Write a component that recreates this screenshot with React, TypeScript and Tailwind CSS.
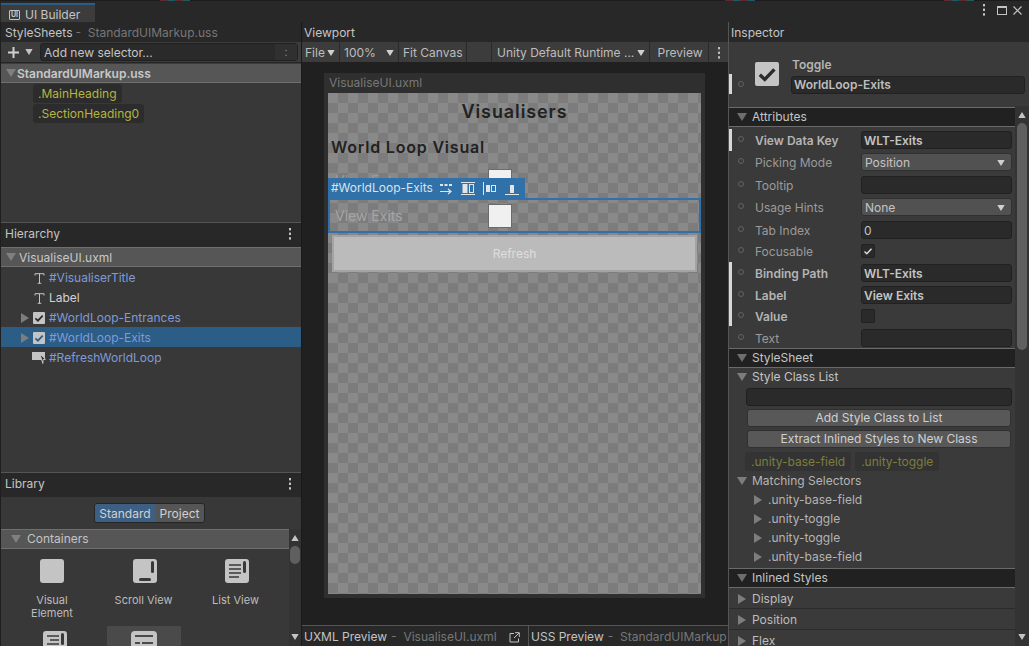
import type { ReactNode } from "react";

const Down = ({ className = "" }: { className?: string }) => (
    <svg width="10" height="8" viewBox="0 0 10 8" className={className}><path d="M0 0h10L5 8z" fill="currentColor" /></svg>
);

const Right = ({ className = "" }: { className?: string }) => (
    <svg width="8" height="10" viewBox="0 0 8 10" className={className}><path d="M0 0l8 5-8 5z" fill="currentColor" /></svg>
);

const Dots = ({ className = "" }: { className?: string }) => (
    <svg width="4" height="12" viewBox="0 0 4 12" className={className}>
        <rect x="1" y="0" width="2" height="2.4" fill="currentColor" />
        <rect x="1" y="4.6" width="2" height="2.4" fill="currentColor" />
        <rect x="1" y="9.2" width="2" height="2.4" fill="currentColor" />
    </svg>
);

const CheckIcon = ({ size = 12, stroke = "#2b2b2b" }: { size?: number; stroke?: string }) => (
    <svg width={size} height={size} viewBox="0 0 12 12">
        <rect width="12" height="12" rx="1" fill="#c4c4c4" />
        <path d="M2.4 6.4l2.5 2.3 4.8-5" fill="none" stroke={stroke} strokeWidth="1.7" />
    </svg>
);

const TIcon = () => (
    <svg width="11" height="11" viewBox="0 0 11 11" className="ml-[1px]">
        <path d="M1 2.5V.7h9v1.8M5.5.7v9.6M3.7 10.3h3.6" fill="none" stroke="#c4c4c4" strokeWidth="1" />
    </svg>
);

const ButtonIcon = () => (
    <svg width="14" height="14" viewBox="0 0 14 14" className="-ml-[1px]">
        <rect y="1" width="13" height="8" fill="#c4c4c4" />
        <path d="M8 3l5.5 5.2-2.4.3-.3 4z" fill="#2e2e2e" stroke="#c4c4c4" strokeWidth="1" />
    </svg>
);

// bits of the window behind, showing along the very top edge
function BehindBits({ className }: { className: string }) {
    return (
        <div className={`flex h-px ${className}`}>
            <div className="w-[8px] bg-[#5c2b2f]" />
            <div className="w-[7px] bg-[#1f5a63]" />
            <div className="w-[8px] bg-[#5c2b2f]" />
            <div className="w-[7px] bg-[#1f5a63]" />
        </div>
    );
}

function PanelHeader({ title, sub, dots, className = "" }: { title: string; sub?: string; dots?: boolean; className?: string }) {
    return (
        <div className={`flex h-5 shrink-0 items-center bg-[#282828] pl-1 pr-[9px] text-[#c4c4c4] ${className}`}>
            <span>{title}</span>
            {sub && <span className="ml-[3px] whitespace-nowrap text-[#777]">-&nbsp; {sub}</span>}
            {dots && <Dots className="ml-auto text-[#c4c4c4]" />}
        </div>
    );
}

function SelectorPill({ children, dim }: { children: ReactNode; dim?: boolean }) {
    return (
        <span className={`rounded-[3px] leading-[19px] ${dim ? "bg-[#333] px-[6px] text-[#7d7d3d]" : "bg-[#2c2c2c] px-[5px] text-[#b5b53f]"}`}>{children}</span>
    );
}

function TreeRow({ icon, label, arrow, selected, white }: { icon: ReactNode; label: string; arrow?: boolean; selected?: boolean; white?: boolean }) {
    return (
        <div className={`flex h-5 items-center pt-[2px] ${selected ? "bg-[#2c5d87]" : ""}`}>
            <div className="flex w-[32px] justify-end pr-[4px] text-[#7d7d7d]">{arrow && <Right />}</div>
            <div className="flex w-4 justify-start">{icon}</div>
            <span className={white ? "text-[#d2d2d2]" : "text-[#7e9bd9]"}>{label}</span>
        </div>
    );
}

function LibraryItem({ label, icon, shift }: { label: ReactNode; icon: ReactNode; shift?: boolean }) {
    return (
        <div className="flex flex-col items-center text-center text-[11px] leading-[13px] text-[#bdbdbd]">
            {icon}
            <div className={`mt-[11px] ${shift ? "-ml-[3px]" : ""}`}>{label}</div>
        </div>
    );
}

function FoldHeader({ title, className = "" }: { title: string; className?: string }) {
    return (
        <div className={`flex items-center border-y border-[#6a6a6a] bg-[#212121] ${className}`}>
            <Down className="ml-[8px] text-[#6e6e6e]" />
            <span className="ml-[5px] text-[#c4c4c4]">{title}</span>
        </div>
    );
}

function CollapsedHeader({ title }: { title: string }) {
    return (
        <div className="flex h-[21px] shrink-0 items-center border-b border-[#2b2b2b] pt-[2px]">
            <Right className="ml-[9px] text-[#7d7d7d]" />
            <span className="ml-[6px] text-[#bdbdbd]">{title}</span>
        </div>
    );
}

function Row({ label, bold, h, marked, children }: { label: string; bold?: boolean; h: string; marked?: boolean; children: ReactNode }) {
    return (
        <div className={`relative flex shrink-0 items-center ${h}`}>
            {marked && <div className="absolute left-0 top-0 h-full w-[3px] bg-[#d8d8d8]" />}
            <span className="ml-[9px] h-[6px] w-[6px] -translate-y-[1px] rounded-full border border-[#626262]" />
            <span className={`ml-[11px] w-[106px] translate-y-[1px] whitespace-nowrap ${bold ? "font-semibold text-[#b4b4b4]" : "text-[#9a9a9a]"}`}>{label}</span>
            {children}
        </div>
    );
}

const inputCls = "flex h-[18px] w-[151px] items-center rounded-[3px] border border-[#212121] bg-[#2a2a2a] px-[2px] pt-[1px] text-[#c4c4c4]";

function Input({ value, bold }: { value?: string; bold?: boolean }) {
    return <div className={`${inputCls} ${bold ? "font-semibold text-[#bdbdbd]" : ""}`}>{value}</div>;
}

function Select({ value }: { value: string }) {
    return (
        <div className="flex h-[18px] w-[151px] items-center justify-between rounded-[3px] border border-[#303030] bg-[#515151] pl-[3px] pr-[5px] pt-[1px] text-[#c4c4c4]">
            {value}
            <Down className="scale-75 text-[#d0d0d0]" />
        </div>
    );
}

function WideButton({ children }: { children: ReactNode }) {
    return (
        <div className="ml-[18px] flex h-[18px] w-[264px] items-center justify-center rounded-[3px] border border-[#303030] bg-[#585858] text-[#d0d0d0]">{children}</div>
    );
}

function ToolCell({ className, children }: { className: string; children?: ReactNode }) {
    return <div className={`flex items-center bg-[#3c3c3c] pt-[2px] ${className}`}>{children}</div>;
}

function SelectorNode({ label }: { label: string }) {
    return (
        <div className="flex h-[19px] items-center">
            <Right className="ml-[25px] text-[#7d7d7d]" />
            <span className="ml-[6px] text-[#b4b4b4]">{label}</span>
        </div>
    );
}

const checker = "bg-[image:conic-gradient(#7c7c7c_25%,#898989_0_50%,#7c7c7c_0_75%,#898989_0)] bg-[size:20px_20px]";

function ToggleBox() {
    return <div className="h-6 w-6 border border-[#6b6b6b] bg-[#f0f0f0]" />;
}

export default function App() {
    return (
        <div className="flex h-[646px] w-[1029px] flex-col overflow-hidden bg-[#282828] text-[12px] leading-[16px] [font-family:Inter,sans-serif]">
            {/* window tab strip */}
            <div className="flex h-[22px] shrink-0 flex-col bg-[#282828]">
                <div className="flex h-px shrink-0 bg-[#1c1c1c]">
                    <BehindBits className="ml-[160px]" />
                    <BehindBits className="ml-[535px]" />
                    <BehindBits className="ml-[189px]" />
                </div>
                <div className="flex min-h-0 flex-1 items-end">
                    <div className="ml-[1px] flex h-[19px] w-[94px] items-center border-t-2 border-[#2c5d87] bg-[#3c3c3c] pl-[8px] pt-[2px] text-[#c4c4c4]">
                        <span className="flex h-[10px] w-[11px] items-center justify-center rounded-[1px] border border-[#c4c4c4] text-[7px] font-bold leading-none">UI</span>
                        <span className="ml-[5px]">UI Builder</span>
                    </div>
                    <div className="ml-auto mr-[7px] mb-[6px] flex items-center gap-[6px] text-[#c4c4c4]">
                        <Dots className="mr-[5px]" />
                        <div className="h-[9px] w-[10px] border border-t-2 border-[#c4c4c4]" />
                        <svg width="9" height="9" viewBox="0 0 9 9"><path d="M.5.5l8 8M8.5.5l-8 8" stroke="#c4c4c4" strokeWidth="1.2" /></svg>
                    </div>
                </div>
            </div>

            <div className="flex min-h-0 flex-1">
                {/* left column */}
                <div className="flex w-[302px] shrink-0 flex-col border-x border-x-[#1f1f1f] border-r-[#1a1a1a]">
                    <div className="flex h-[200px] shrink-0 flex-col bg-[#383838]">
                        <PanelHeader title="StyleSheets" sub="StandardUIMarkup.uss" className="pt-[2px]" />
                        <div className="flex h-[21px] shrink-0 items-center border-b border-[#252525] bg-[#3c3c3c]">
                            <svg width="13" height="13" viewBox="0 0 13 13" className="ml-[6px]"><path d="M6.5 1v11M1 6.5h11" stroke="#d0d0d0" strokeWidth="2" /></svg>
                            <Down className="ml-[4px] scale-75 text-[#c4c4c4]" />
                            <div className="ml-[6px] flex h-[18px] w-[258px] items-center justify-between rounded-[3px] border border-[#212121] bg-[#2a2a2a] pl-[3px] text-[#c4c4c4]">
                                <span className="translate-y-[1px]">Add new selector...</span>
                                <span className="flex h-full w-[22px] items-center justify-center bg-[#303030] text-[#777]">:</span>
                            </div>
                        </div>
                        <div className="flex h-[20px] items-center border-y border-[#6f6f6f] border-t-[#3c3c3c] bg-[#565656] pl-[5px] pt-[2px]">
                            <Down className="-translate-y-[1px] text-[#808080]" />
                            <span className="ml-[1px] font-semibold text-[#c8c8c8]">StandardUIMarkup.uss</span>
                        </div>
                        <div className="ml-[32px] mt-[1px] flex flex-col items-start gap-[1px]">
                            <SelectorPill>.MainHeading</SelectorPill>
                            <SelectorPill>.SectionHeading0</SelectorPill>
                        </div>
                    </div>

                    <div className="flex h-[250px] shrink-0 flex-col border-t border-[#555] bg-[#383838]">
                        <div className="h-[24px] shrink-0 bg-[#282828] pt-[1px]"><PanelHeader title="Hierarchy" dots /></div>
                        <div className="flex h-[20px] shrink-0 items-center border-y border-[#6f6f6f] bg-[#565656] pl-[5px] pt-[2px]">
                            <Down className="-translate-y-[1px] text-[#808080]" />
                            <span className="ml-[3px] text-[#c8c8c8]">VisualiseUI.uxml</span>
                        </div>
                        <TreeRow icon={<TIcon />} label="#VisualiserTitle" />
                        <TreeRow icon={<TIcon />} label="Label" white />
                        <TreeRow icon={<CheckIcon />} label="#WorldLoop-Entrances" arrow />
                        <TreeRow icon={<CheckIcon stroke="#2c5d87" />} label="#WorldLoop-Exits" arrow selected />
                        <TreeRow icon={<ButtonIcon />} label="#RefreshWorldLoop" />
                    </div>

                    <div className="flex min-h-0 flex-1 flex-col overflow-hidden border-t border-[#555] bg-[#383838]">
                        <div className="h-[24px] shrink-0 bg-[#282828] pt-[1px]"><PanelHeader title="Library" dots /></div>
                        <div className="flex h-[32px] shrink-0 items-center justify-center pr-[3px]">
                            <div className="flex h-[20px] overflow-hidden rounded-[3px] border border-[#252525] text-[#d0d0d0]">
                                <span className="flex w-[60px] items-center justify-center bg-[#3e5f84] pt-[2px]">Standard</span>
                                <span className="flex w-[49px] items-center justify-center bg-[#555] pt-[2px]">Project</span>
                            </div>
                        </div>
                        <div className="flex min-h-0 flex-1">
                            <div className="min-w-0 flex-1">
                                <div className="flex h-[20px] items-center border-y border-[#6f6f6f] bg-[#565656] pl-[10px]">
                                    <Down className="text-[#808080]" />
                                    <span className="ml-[6px] text-[#c4c4c4]">Containers</span>
                                </div>
                                <div className="grid grid-cols-[102px_84px_100px] pt-[10px]">
                                    <LibraryItem label={<>Visual<br />Element</>} icon={<div className="h-6 w-6 rounded-[3px] bg-[#c4c4c4]" />} />
                                    <LibraryItem shift label="Scroll View" icon={
                                        <svg width="24" height="24" viewBox="0 0 24 24"><rect width="24" height="24" rx="3" fill="#c4c4c4" /><rect x="18" y="2" width="3" height="12" rx="1.5" fill="#383838" /><rect x="6" y="19" width="12" height="3" rx="1.5" fill="#383838" /></svg>
                                    } />
                                    <LibraryItem shift label="List View" icon={
                                        <svg width="24" height="24" viewBox="0 0 24 24"><rect width="24" height="24" rx="3" fill="#c4c4c4" /><rect x="18" y="2" width="3" height="12" rx="1.5" fill="#383838" /><path d="M4 6h12M4 10h12M4 14h12M4 18h10" stroke="#383838" strokeWidth="1.6" /></svg>
                                    } />
                                </div>
                                <div className="mt-[6px] grid grid-cols-[106px_74px]">
                                    <div className="flex justify-center pl-[2px] pt-[5px]">
                                        <svg width="24" height="24" viewBox="0 0 24 24"><rect width="24" height="24" rx="3" fill="#c4c4c4" /><rect x="18" y="2" width="3" height="12" rx="1.5" fill="#383838" /><path d="M4 5h12M7 9h9M4 13h12" stroke="#383838" strokeWidth="1.6" /></svg>
                                    </div>
                                    <div className="flex h-[40px] justify-center bg-[#4a4a4a] pt-[5px]">
                                        <svg width="26" height="24" viewBox="0 0 26 24"><rect width="26" height="24" rx="4" fill="#c4c4c4" /><path d="M4 5h18M4 12h5M11 12h11" stroke="#4a4a4a" strokeWidth="2" /></svg>
                                    </div>
                                </div>
                            </div>
                            <div className="flex w-[12px] shrink-0 flex-col items-center bg-[#333] pt-[5px] text-[#c4c4c4]">
                                <Down className="rotate-180 scale-75" />
                                <div className="mt-[4px] h-[18px] w-[10px] rounded-full bg-[#5f5f5f]" />
                                <Down className="mt-auto mb-[5px] scale-75" />
                            </div>
                        </div>
                    </div>
                </div>

                {/* viewport */}
                <div className="flex w-[427px] shrink-0 flex-col border-r border-[#555]">
                    <div className="h-5 shrink-0 bg-[#282828] pl-[2px] pt-[3px] text-[#c4c4c4]">Viewport</div>
                    <div className="flex h-[20px] shrink-0 gap-[1px] bg-[#2a2a2a] text-[#bdbdbd]">
                        <ToolCell className="w-[37px] pl-[3px]">File<Down className="ml-[1px] scale-75 text-[#d0d0d0]" /></ToolCell>
                        <ToolCell className="w-[58px] justify-between pl-[4px] pr-[3px]">100%<Down className="scale-75 text-[#d0d0d0]" /></ToolCell>
                        <ToolCell className="w-[67px] pl-[4px]">Fit Canvas</ToolCell>
                        <ToolCell className="w-[24px]" />
                        <ToolCell className="w-[157px] justify-between whitespace-nowrap pl-[5px] pr-[3px]">Unity Default Runtime ...<Down className="scale-75 text-[#d0d0d0]" /></ToolCell>
                        <ToolCell className="w-[58px] justify-center pl-[2px]">Preview</ToolCell>
                        <ToolCell className="min-w-0 flex-1 justify-center"><Dots /></ToolCell>
                    </div>
                    <div className="min-h-0 flex-1 bg-[#202020] pl-[22px] pt-[11px]">
                        <div className="flex h-[525px] w-[381px] flex-col bg-[#2f2f2f] px-[4px] pb-[4px]">
                            <div className="flex h-[20px] shrink-0 items-center pl-[1px] text-[#777]">VisualiseUI.uxml</div>
                            <div className={`relative min-h-0 flex-1 ${checker}`}>
                                <div className="pt-[8px] text-center text-[18px] font-semibold leading-[22px] tracking-[0.05em] text-[#222]">Visualisers</div>
                                <div className="mt-[14px] pl-[3px] text-[16px] font-semibold leading-[20px] tracking-[0.05em] text-[#222]">World Loop Visual</div>
                                <div className="mt-[12px] flex h-[29px] items-start pl-[7px] text-[14px] text-[#9b9b9b]">
                                    <span className="w-[153px] leading-[24px]">View Entrances</span>
                                    <ToggleBox />
                                </div>
                                <div className="flex h-[35px] items-center border-2 border-[#2f71a8] pl-[5px] text-[14px] text-[#a5a5a5]">
                                    <span className="w-[153px]">View Exits</span>
                                    <ToggleBox />
                                </div>
                                <div className="mx-[4px] mt-[2px] flex h-[37px] items-center justify-center border-2 border-[#a3a3a3] bg-[#bbbbbb] text-[#dedede]">Refresh</div>
                                {/* selection label over the canvas */}
                                <div className="absolute left-0 top-[85px] flex h-[20px] w-[197px] items-center bg-[#2f71a8] pl-[3px] text-[#d8e4ee]">
                                    <span>#WorldLoop-Exits</span>
                                    <svg width="14" height="13" viewBox="0 0 14 13" className="ml-[6px]"><path d="M1 2h3v2H1zM5.5 2h3v2h-3zM10 2h3v2h-3z" fill="#e4e4e4" /><path d="M1 9.5h10M9 7l3 2.5L9 12" fill="none" stroke="#e4e4e4" strokeWidth="1.2" /></svg>
                                    <svg width="14" height="13" viewBox="0 0 14 13" className="ml-[8px]"><path d="M0 .5h14M0 12.5h14" stroke="#e4e4e4" /><rect x="1.5" y="2" width="5" height="9" fill="#e4e4e4" /><rect x="8.5" y="2.5" width="4" height="8" fill="none" stroke="#e4e4e4" /></svg>
                                    <svg width="14" height="13" viewBox="0 0 14 13" className="ml-[8px]"><path d="M.5 0v13" stroke="#e4e4e4" /><rect x="3" y="3" width="4" height="7" fill="#e4e4e4" /><rect x="8.5" y="3.5" width="4" height="6" fill="none" stroke="#e4e4e4" /></svg>
                                    <svg width="14" height="13" viewBox="0 0 14 13" className="ml-[8px]"><path d="M0 12.5h14" stroke="#e4e4e4" /><rect x="5" y="3" width="4" height="8" fill="#e4e4e4" /></svg>
                                </div>
                            </div>
                        </div>
                    </div>
                    <div className="flex h-[21px] shrink-0 border-t border-[#555] bg-[#282828]">
                        <div className="flex w-[227px] items-center whitespace-nowrap border-r border-[#555] pl-[2px] pt-[2px]">
                            <span className="text-[#c4c4c4]">UXML Preview</span>
                            <span className="ml-[4px] text-[#777]">-&nbsp; VisualiseUI.uxml</span>
                            <svg width="11" height="11" viewBox="0 0 11 11" className="ml-auto mr-[8px]"><path d="M5 1.5H1v8.5h8.5V6.5M6 .7h4.3V5M10 1L5 6" fill="none" stroke="#c4c4c4" /></svg>
                        </div>
                        <div className="flex min-w-0 flex-1 items-center overflow-hidden whitespace-nowrap pl-[2px] pt-[2px]">
                            <span className="text-[#c4c4c4]">USS Preview</span>
                            <span className="ml-[4px] text-[#777]">-&nbsp; StandardUIMarkup</span>
                        </div>
                    </div>
                </div>

                {/* inspector */}
                <div className="flex min-w-0 flex-1 flex-col bg-[#3a3a3a]">
                    <div className="h-5 shrink-0 bg-[#282828] pl-[2px] pt-[3px] text-[#c4c4c4]">Inspector</div>
                    <div className="relative flex h-[64px] shrink-0 items-start">
                        <div className="absolute left-0 top-[32px] h-[20px] w-[3px] bg-[#d8d8d8]" />
                        <span className="absolute left-[9px] top-[39px] h-[6px] w-[6px] rounded-full border border-[#626262]" />
                        <div className="ml-[26px] mt-[20px]"><CheckIcon size={24} /></div>
                        <div className="ml-[12px] mt-[15px]">
                            <div className="pl-[1px] font-semibold text-[#b4b4b4]">Toggle</div>
                            <div className="mt-[3px] flex h-[18px] w-[234px] items-center rounded-[3px] border border-[#212121] bg-[#2a2a2a] px-[2px] font-semibold text-[#bdbdbd]">WorldLoop-Exits</div>
                        </div>
                    </div>
                    <div className="flex min-h-0 flex-1">
                        <div className="flex min-w-0 flex-1 flex-col">
                            <div className="mb-[2px] mt-[1px] shrink-0"><FoldHeader title="Attributes" className="h-[20px]" /></div>
                            <Row label="View Data Key" bold marked h="h-[22px]"><Input value="WLT-Exits" bold /></Row>
                            <Row label="Picking Mode" h="h-[22px]"><Select value="Position" /></Row>
                            <Row label="Tooltip" h="h-[23px] pt-[1px]"><Input /></Row>
                            <Row label="Usage Hints" h="h-[22px]"><Select value="None" /></Row>
                            <Row label="Tab Index" h="h-[22px] pt-[2px]"><Input value="0" /></Row>
                            <Row label="Focusable" h="h-[22px]">
                                <div className="flex h-[14px] w-[14px] items-center justify-center rounded-[2px] border border-[#212121] bg-[#2a2a2a]">
                                    <svg width="10" height="10" viewBox="0 0 10 10"><path d="M1.5 5.5l2.3 2.2 4.7-5" fill="none" stroke="#e0e0e0" strokeWidth="1.4" /></svg>
                                </div>
                            </Row>
                            <Row label="Binding Path" bold marked h="h-[22px]"><Input value="WLT-Exits" bold /></Row>
                            <Row label="Label" bold marked h="h-[22px]"><Input value="View Exits" bold /></Row>
                            <Row label="Value" bold marked h="h-[20px]"><div className="h-[14px] w-[14px] rounded-[2px] border border-[#212121] bg-[#2a2a2a]" /></Row>
                            <Row label="Text" h="h-[22px] pt-[2px]"><Input /></Row>
                            <FoldHeader title="StyleSheet" className="h-[20px] shrink-0" />
                            <div className="flex h-[18px] shrink-0 items-center pl-[8px]">
                                <Down className="text-[#7d7d7d]" />
                                <span className="ml-[5px] text-[#c4c4c4]">Style Class List</span>
                            </div>
                            <div className="ml-[17px] mt-[2px] h-[18px] w-[266px] shrink-0 rounded-[3px] border border-[#1f1f1f] bg-[#2a2a2a]" />
                            <div className="mt-[3px] flex shrink-0 flex-col gap-[3px]">
                                <WideButton>Add Style Class to List</WideButton>
                                <WideButton>Extract Inlined Styles to New Class</WideButton>
                            </div>
                            <div className="ml-[16px] mt-[4px] flex shrink-0 gap-[4px]">
                                <SelectorPill dim>.unity-base-field</SelectorPill>
                                <SelectorPill dim>.unity-toggle</SelectorPill>
                            </div>
                            <div className="flex h-[19px] shrink-0 items-center pl-[8px]">
                                <Down className="text-[#7d7d7d]" />
                                <span className="ml-[5px] text-[#b4b4b4]">Matching Selectors</span>
                            </div>
                            <div className="shrink-0">
                                <SelectorNode label=".unity-base-field" />
                                <SelectorNode label=".unity-toggle" />
                                <SelectorNode label=".unity-toggle" />
                                <SelectorNode label=".unity-base-field" />
                            </div>
                            <FoldHeader title="Inlined Styles" className="mt-[2px] h-[20px] shrink-0 pb-[1px]" />
                            <CollapsedHeader title="Display" />
                            <CollapsedHeader title="Position" />
                            <CollapsedHeader title="Flex" />
                        </div>
                        <div className="flex w-[14px] shrink-0 flex-col items-center bg-[#333] pt-[5px] text-[#c4c4c4]">
                            <Down className="rotate-180 scale-75" />
                            <div className="mt-[4px] h-[227px] w-[10px] rounded-full bg-[#5f5f5f]" />
                            <Down className="mt-auto mb-[5px] scale-75" />
                        </div>
                    </div>
                </div>
            </div>
        </div>
    );
}
